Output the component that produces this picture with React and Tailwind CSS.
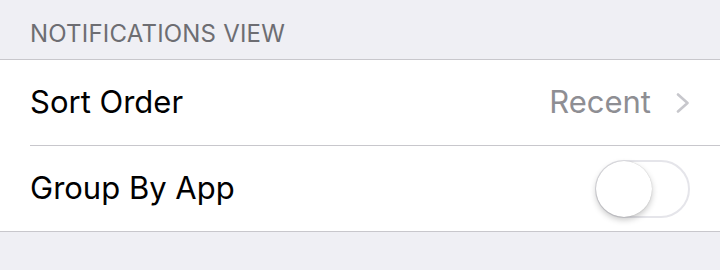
import React, { useState } from 'react';

function Chevron() {
  return (
    <svg width="14" height="20" viewBox="0 0 14 20" fill="none">
      <path d="M2 1.5 L11.5 10 L2 18.5" stroke="#c7c7cc" strokeWidth="2.6" strokeLinecap="round" strokeLinejoin="round" />
    </svg>
  );
}

function Toggle({ on, onChange }) {
  return (
    <button
      onClick={() => onChange(!on)}
      className={`relative w-[95px] h-[58px] rounded-full border-2 ${on ? 'bg-[#4cd964] border-[#4cd964]' : 'bg-white border-[#e5e5ea]'}`}
    >
      <span
        className={`absolute top-[-1px] w-[56px] h-[56px] rounded-full bg-white shadow-[0_3px_6px_rgba(0,0,0,0.22),0_0_1px_rgba(0,0,0,0.25)] ${on ? 'left-[36px]' : 'left-[-1px]'}`}
      />
    </button>
  );
}

export default function App() {
  const [grouped, setGrouped] = useState(false);

  return (
    <div className="w-[720px] h-[270px] bg-[#efeff4] overflow-hidden" style={{ fontFamily: 'Inter, "Liberation Sans", sans-serif' }}>
      <div className="h-[59px] pl-[30px] pt-[16px] text-[24px] text-[#6d6d72] tracking-[0.2px]">
        NOTIFICATIONS VIEW
      </div>
      <div className="bg-white border-y border-[#c8c7cc]">
        <div className="flex items-center h-[86px] pl-[30px]">
          <div className="flex-1 flex items-center h-full border-b border-[#c8c7cc] pr-[30px]">
            <span className="flex-1 text-[31px] text-black">Sort Order</span>
            <span className="text-[31px] text-[#8e8e93] mr-[25px]">Recent</span>
            <Chevron />
          </div>
        </div>
        <div className="flex items-center h-[85px] pl-[30px] pr-[30px]">
          <span className="flex-1 text-[31px] text-black">Group By App</span>
          <Toggle on={grouped} onChange={setGrouped} />
        </div>
      </div>
    </div>
  );
}
